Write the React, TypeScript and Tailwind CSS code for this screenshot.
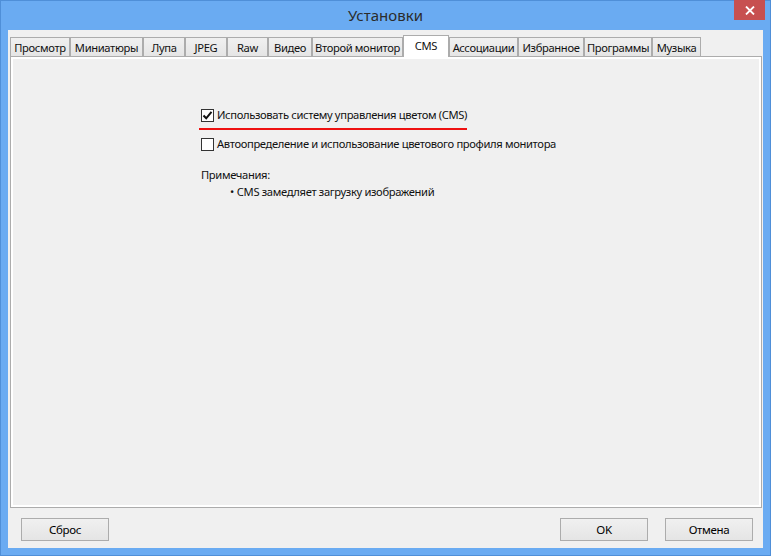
import React from 'react'

const TABS: { label: string; w: string; active?: boolean }[] = [
  { label: 'Просмотр', w: 'w-[60px]' },
  { label: 'Миниатюры', w: 'w-[73px]' },
  { label: 'Лупа', w: 'w-[42px]' },
  { label: 'JPEG', w: 'w-[42px]' },
  { label: 'Raw', w: 'w-[41px]' },
  { label: 'Видео', w: 'w-[44px]' },
  { label: 'Второй монитор', w: 'w-[91px]' },
  { label: 'CMS', w: 'w-[46px]', active: true },
  { label: 'Ассоциации', w: 'w-[69px]' },
  { label: 'Избранное', w: 'w-[66px]' },
  { label: 'Программы', w: 'w-[68px]' },
  { label: 'Музыка', w: 'w-[49px]' },
]

function CheckBox({ checked }: { checked?: boolean }) {
  return (
    <span className="flex h-[13px] w-[13px] shrink-0 items-center justify-center border border-[#333333] bg-white">
      {checked && (
        <svg width="11" height="11" viewBox="0 0 11 11">
          <path d="M1.5 5.5 L4.2 8.3 L9.5 1.8" fill="none" stroke="#111" strokeWidth="2" />
        </svg>
      )}
    </span>
  )
}

const btnCls = `
  h-[23px] w-[88px] border border-[#acacac]
  bg-gradient-to-b from-[#f0f0f0] to-[#e5e5e5]
  text-[11.5px] text-black
`.trim()

export default function App() {
  return (
    <div
      className="flex h-[556px] w-[771px] flex-col border border-[#4f8fd8] bg-[#6aabf2] text-[11.2px] tracking-[-0.35px] text-[#111]"
      style={{ fontFamily: '"Noto Sans", "Open Sans", sans-serif' }}
    >
      {/* title bar */}
      <div className="relative flex h-[29px] shrink-0 items-center justify-center">
        <span className="text-[15px] tracking-normal text-[#2b2b2b]">Установки</span>
        <button className="absolute right-[5px] top-[-1px] flex h-[20px] w-[31px] items-center justify-center bg-[#c75050]">
          <svg width="10" height="9" viewBox="0 0 10 9">
            <path d="M1 0.5 L9 8.5 M9 0.5 L1 8.5" stroke="#fff" strokeWidth="1.8" />
          </svg>
        </button>
      </div>

      {/* client area */}
      <div className="mx-[7px] mb-[7px] flex flex-1 flex-col bg-[#f0f0f0]">
        <div className="flex items-end pl-[2px] pt-[5px]">
          {TABS.map(t =>
            t.active ? (
              <div
                key={t.label}
                className={`${t.w} relative z-10 -mb-px flex h-[22px] items-start justify-center whitespace-nowrap border border-b-0 border-[#acacac] bg-white pt-[2px]`}
              >
                {t.label}
              </div>
            ) : (
              <div
                key={t.label}
                className={`${t.w} flex h-[19px] items-center justify-center whitespace-nowrap border border-b-0 border-[#acacac] bg-gradient-to-b from-[#f0f0f0] to-[#e5e5e5] pt-[1px] leading-none`}
              >
                {t.label}
              </div>
            ),
          )}
        </div>

        {/* panel */}
        <div className="ml-[2px] mr-[1px] flex flex-1 flex-col border border-[#acacac]">
          <div className="flex flex-1 flex-col border-2 border-white pl-[188px] pt-[48px]">
            <div className="flex h-[16px] items-center gap-[3px]">
              <CheckBox checked />
              <span>Использовать систему управления цветом (CMS)</span>
            </div>
            <div className="-ml-[2px] mt-[5px] h-[2px] w-[268px] bg-[#ee1111]" />
            <div className="mt-[6px] flex h-[16px] items-center gap-[3px]">
              <CheckBox />
              <span>Автоопределение и использование цветового профиля монитора</span>
            </div>
            <div className="mt-[15px] flex h-[16px] items-center">Примечания:</div>
            <div className="mt-[1px] flex h-[16px] items-center pl-[29px]">
              <span className="mr-[3px]">•</span>
              <span>CMS замедляет загрузку изображений</span>
            </div>
          </div>
        </div>

        {/* buttons */}
        <div className="flex h-[40px] shrink-0 items-start pl-[13px] pr-[10px] pt-[10px]">
          <button className={btnCls}>Сброс</button>
          <div className="flex-1" />
          <button className={`${btnCls} border-[#3c9bf0]`}>OK</button>
          <button className={`${btnCls} ml-[17px]`}>Отмена</button>
        </div>
      </div>
    </div>
  )
}
